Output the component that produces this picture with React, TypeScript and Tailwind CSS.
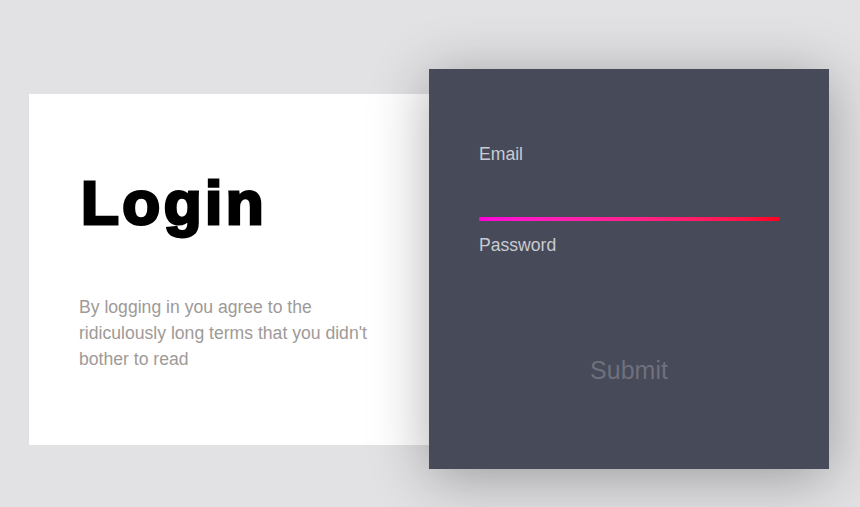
export default function App() {
  return (
    <div
      className="min-h-[507px] w-full bg-[#e2e2e4] pl-[29px] pt-[69px]"
      style={{ fontFamily: '"Liberation Sans", Arial, sans-serif' }}
    >
      <div className="flex w-[800px] items-center">
        {/* Intro card */}
        <div className="h-[351px] w-[400px] shrink-0 bg-white px-[50px] pt-[78px]">
          <h1 className="ml-[2px] text-[62px] font-bold leading-none tracking-[3.5px] text-black [-webkit-text-stroke:3px_black]">
            Login
          </h1>
          <p className="mt-[60px] text-[17.6px] leading-[26px] text-[#9e9a97]">
            By logging in you agree to the ridiculously long terms that you didn't bother to read
          </p>
        </div>

        {/* Form panel */}
        <form className="relative z-10 flex h-[400px] w-[400px] shrink-0 flex-col bg-[#474a59] px-[50px] pt-[75px] shadow-[0_8px_55px_rgba(0,0,0,0.32)]">
          <label className="block text-[17.6px] leading-[20px] text-[#c9cad1]">Email</label>
          <input
            type="email"
            className="block h-[53px] w-full border-0 bg-transparent text-[17.6px] text-white outline-none"
          />
          <div className="h-[4px] w-full bg-gradient-to-r from-[#ff00dc] to-[#ff0022]" />

          <label className="mt-[14px] block text-[17.6px] leading-[20px] text-[#c9cad1]">
            Password
          </label>
          <input
            type="password"
            className="block h-[56px] w-full border-0 bg-transparent text-[17.6px] text-white outline-none"
          />

          <button
            type="button"
            className="mx-auto mt-[45px] block bg-transparent text-[25px] leading-[29px] text-[#6e707c]"
          >
            Submit
          </button>
        </form>
      </div>
    </div>
  );
}
